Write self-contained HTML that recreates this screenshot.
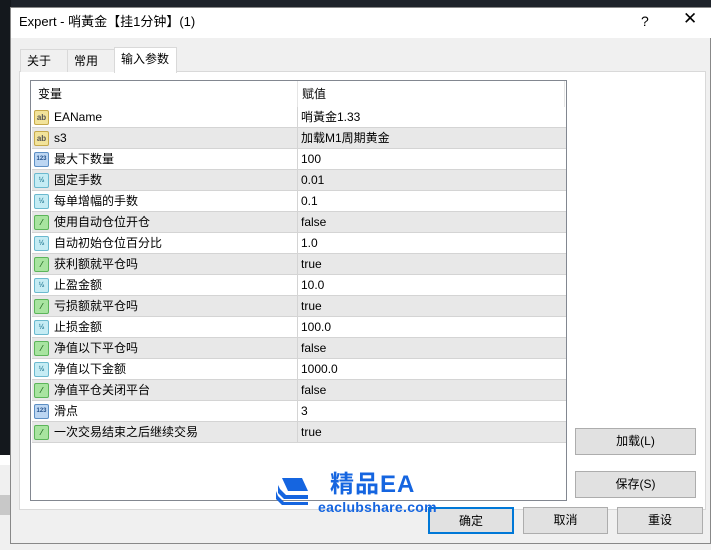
<!DOCTYPE html>
<html><head><meta charset="utf-8"><style>
*{margin:0;padding:0;box-sizing:border-box}
body{width:711px;height:550px;overflow:hidden;background:#f0f0f0;font-family:"Liberation Sans","Noto Sans CJK SC",sans-serif;font-size:12px;line-height:16px;color:#000;position:relative}
.abs{position:absolute}
.dark{left:0;top:0;width:711px;height:8px;background:#1e232a}
.leftdark{left:0;top:0;width:11px;height:455px;background:#14181d}
.dlg{left:10px;top:7px;width:701px;height:537px;background:#f0f0f0;border:1px solid #888}
.title{left:11px;top:8px;width:700px;height:30px;background:#fff}
.tab{top:49px;height:23px;border:1px solid #d9d9d9;border-bottom:none;background:#f0f0f0;padding:3px 0 0 6px;font-size:12px;line-height:16px}
.panel{left:19px;top:71px;width:687px;height:439px;background:#fff;border:1px solid #d9d9d9}
.table{left:30px;top:80px;width:537px;height:421px;border:1px solid #828790;background:#fff}
.row{position:absolute;left:1px;width:534px;height:21px;border-bottom:1px solid #d4d4d4}
.row.g{background:#e8e8e8}
.row .n{position:absolute;left:22px;top:0;line-height:20px}
.row .v{position:absolute;left:269px;top:0;line-height:20px}
.row .sep{position:absolute;left:265px;top:0;width:1px;height:21px;background:#d4d4d4}
.ic{position:absolute;left:2px;top:3px;width:15px;height:15px;border-radius:2px;font-size:8px;line-height:13px;text-align:center;font-weight:bold}
.ab{background:#f2e39a;border:1px solid #c6a94a;color:#555}
.n123{background:#bcd6f2;border:1px solid #5d8fc4;color:#24508a;font-size:6px}
.v2{background:#c5ecf4;border:1px solid #6bb9cf;color:#2c7f99;font-size:7px}
.bo{background:#a8e4a0;border:1px solid #5cb55a;color:#226a22}
.btn{height:27px;border:1px solid #adadad;background:#e1e1e1;text-align:center;line-height:25px;font-size:12px}
</style></head><body>
<div class="abs dark"></div>
<div class="abs leftdark"></div>
<div class="abs" style="left:0;top:455px;width:11px;height:10px;background:#fff"></div>
<div class="abs" style="left:0;top:495px;width:11px;height:20px;background:#c8c8c8"></div>
<div class="abs dlg"></div>
<div class="abs title"></div>
<div class="abs" style="left:19px;top:13px;font-size:13px;line-height:18px">Expert - 哨黃金【挂1分钟】(1)</div>
<div class="abs" style="left:641px;top:13px;font-size:14px">?</div>
<div class="abs" style="left:683px;top:11px;font-size:17px;font-weight:300">✕</div>
<div class="abs panel"></div>
<div class="abs tab" style="left:20px;width:48px">关于</div>
<div class="abs tab" style="left:67px;width:48px">常用</div>
<div class="abs tab" style="left:114px;width:63px;top:47px;height:26px;background:#fff">输入参数</div>
<div class="abs table">
<div class="abs" style="left:7px;top:5px">变量</div>
<div class="abs" style="left:271px;top:5px">赋值</div>
<div class="abs" style="left:266px;top:0;width:1px;height:26px;background:#e5e5e5"></div>
<div class="abs" style="left:533px;top:0;width:1px;height:26px;background:#e5e5e5"></div>
<div class="row" style="top:26px"><span class="ic ab">ab</span><span class="n">EAName</span><span class="sep"></span><span class="v">哨黃金1.33</span></div>
<div class="row g" style="top:47px"><span class="ic ab">ab</span><span class="n">s3</span><span class="sep"></span><span class="v">加载M1周期黄金</span></div>
<div class="row" style="top:68px"><span class="ic n123">123</span><span class="n">最大下数量</span><span class="sep"></span><span class="v">100</span></div>
<div class="row g" style="top:89px"><span class="ic v2">½</span><span class="n">固定手数</span><span class="sep"></span><span class="v">0.01</span></div>
<div class="row" style="top:110px"><span class="ic v2">½</span><span class="n">每单增幅的手数</span><span class="sep"></span><span class="v">0.1</span></div>
<div class="row g" style="top:131px"><span class="ic bo">⁄</span><span class="n">使用自动仓位开仓</span><span class="sep"></span><span class="v">false</span></div>
<div class="row" style="top:152px"><span class="ic v2">½</span><span class="n">自动初始仓位百分比</span><span class="sep"></span><span class="v">1.0</span></div>
<div class="row g" style="top:173px"><span class="ic bo">⁄</span><span class="n">获利额就平仓吗</span><span class="sep"></span><span class="v">true</span></div>
<div class="row" style="top:194px"><span class="ic v2">½</span><span class="n">止盈金额</span><span class="sep"></span><span class="v">10.0</span></div>
<div class="row g" style="top:215px"><span class="ic bo">⁄</span><span class="n">亏损额就平仓吗</span><span class="sep"></span><span class="v">true</span></div>
<div class="row" style="top:236px"><span class="ic v2">½</span><span class="n">止损金额</span><span class="sep"></span><span class="v">100.0</span></div>
<div class="row g" style="top:257px"><span class="ic bo">⁄</span><span class="n">净值以下平仓吗</span><span class="sep"></span><span class="v">false</span></div>
<div class="row" style="top:278px"><span class="ic v2">½</span><span class="n">净值以下金额</span><span class="sep"></span><span class="v">1000.0</span></div>
<div class="row g" style="top:299px"><span class="ic bo">⁄</span><span class="n">净值平仓关闭平台</span><span class="sep"></span><span class="v">false</span></div>
<div class="row" style="top:320px"><span class="ic n123">123</span><span class="n">滑点</span><span class="sep"></span><span class="v">3</span></div>
<div class="row g" style="top:341px"><span class="ic bo">⁄</span><span class="n">一次交易结束之后继续交易</span><span class="sep"></span><span class="v">true</span></div>
</div>
<div class="abs btn" style="left:575px;top:428px;width:121px">加载(L)</div>
<div class="abs btn" style="left:575px;top:471px;width:121px">保存(S)</div>
<div class="abs btn" style="left:428px;top:507px;width:86px;border:2px solid #0078d7">确定</div>
<div class="abs btn" style="left:523px;top:507px;width:85px">取消</div>
<div class="abs btn" style="left:617px;top:507px;width:86px">重设</div>
<svg class="abs" style="left:274px;top:475px" width="40" height="32" viewBox="0 0 40 32">
<path d="M8 3 L28 3 L34 16 L14 16 Z" fill="#1565e0"/>
<path d="M4 10 L4 18 L10 24 L34 24 L34 20 L12 20 L6 14 Z" fill="#1565e0"/>
<path d="M2 16 L2 24 L8 30 L34 30 L34 27 L10 27 L4 21 Z" fill="#1565e0"/>
</svg>
<div class="abs" style="left:330px;top:470px;font-size:24px;line-height:30px;font-weight:bold;color:#1565e0;letter-spacing:1px">精品EA</div>
<div class="abs" style="left:318px;top:499px;font-size:14px;line-height:16px;font-weight:bold;color:#1565e0;font-family:'Liberation Sans',sans-serif;letter-spacing:0.3px">eaclubshare.com</div>
</body></html>
